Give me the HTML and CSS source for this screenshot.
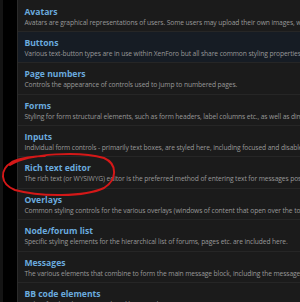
FILE: index.html
```html
<!DOCTYPE html>
<html lang="en">
<head>
    <meta charset="UTF-8">
    <title>Style properties</title>
    <link rel="stylesheet" href="styles.css">
</head>
<body>
    <div class="page">
        <div class="gutter"></div>
        <div class="panel">
            <div class="group cut-top">
                <div class="group-title">Avatars</div>
                <div class="group-desc">Avatars are graphical representations of users. Some users may upload their own images, while others use the default letter avatars.</div>
            </div>
            <div class="group hovered">
                <div class="group-title">Buttons</div>
                <div class="group-desc">Various text-button types are in use within XenForo but all share common styling properties, which are set here.</div>
            </div>
            <div class="group">
                <div class="group-title">Page numbers</div>
                <div class="group-desc">Controls the appearance of controls used to jump to numbered pages.</div>
            </div>
            <div class="group">
                <div class="group-title">Forms</div>
                <div class="group-desc">Styling for form structural elements, such as form headers, label columns etc., as well as dimensions.</div>
            </div>
            <div class="group">
                <div class="group-title">Inputs</div>
                <div class="group-desc">Individual form controls - primarily text boxes, are styled here, including focused and disabled variations.</div>
            </div>
            <div class="group">
                <div class="group-title">Rich text editor</div>
                <div class="group-desc">The rich text (or WYSIWYG) editor is the preferred method of entering text for messages posted by users.</div>
            </div>
            <div class="group">
                <div class="group-title">Overlays</div>
                <div class="group-desc">Common styling controls for the various overlays (windows of content that open over the top of the page).</div>
            </div>
            <div class="group">
                <div class="group-title">Node/forum list</div>
                <div class="group-desc">Specific styling elements for the hierarchical list of forums, pages etc. are included here.</div>
            </div>
            <div class="group">
                <div class="group-title">Messages</div>
                <div class="group-desc">The various elements that combine to form the main message block, including the message itself.</div>
            </div>
            <div class="group">
                <div class="group-title">BB code elements</div>
                <div class="group-desc">Styling for the elements produced by BB code tags.</div>
            </div>
        </div>
    </div>

    <!-- hand-drawn marker around the rich text editor row -->
    <svg class="scribble" width="300" height="302" viewBox="0 0 300 302">
        <path d="M10 165 C30 153 80 151 104 158 C118 164 117 180 104 188 C85 197 40 197 15 190 C0 184 -1 170 12 162 C20 158 35 156 45 156" fill="none" stroke="#d41818" stroke-width="2" stroke-linecap="round"/>
    </svg>
</body>
</html>
```

FILE: styles.css
```css
body {
    margin: 0;
    background-color: #000000;
    font-family: 'Open Sans', sans-serif;
    overflow: hidden;
}
.page {
    display: flex;
    height: 302px;
}
.gutter {
    width: 21px;
    border-left: 3px solid #141414;
    background-color: #000000;
}
.panel {
    flex-grow: 1;
    background-color: #1b1b1b;
    border-left: 1px solid #2b2b2b;
    overflow: hidden;
}
.group {
    padding: 6px 6px 3.4px;
    border-bottom: 1px solid #262626;
}
.group.cut-top {
    margin-top: 0.5px;
}
.group.hovered {
    background-color: #161c24;
}
.group-title {
    font-size: 8.6px;
    font-weight: 700;
    line-height: 11px;
    color: #6aaade;
}
.group-desc {
    font-size: 6.7px;
    letter-spacing: -0.1px;
    line-height: 10px;
    color: #999999;
    white-space: nowrap;
}
.scribble {
    position: absolute;
    left: 0;
    top: 0;
}
```
